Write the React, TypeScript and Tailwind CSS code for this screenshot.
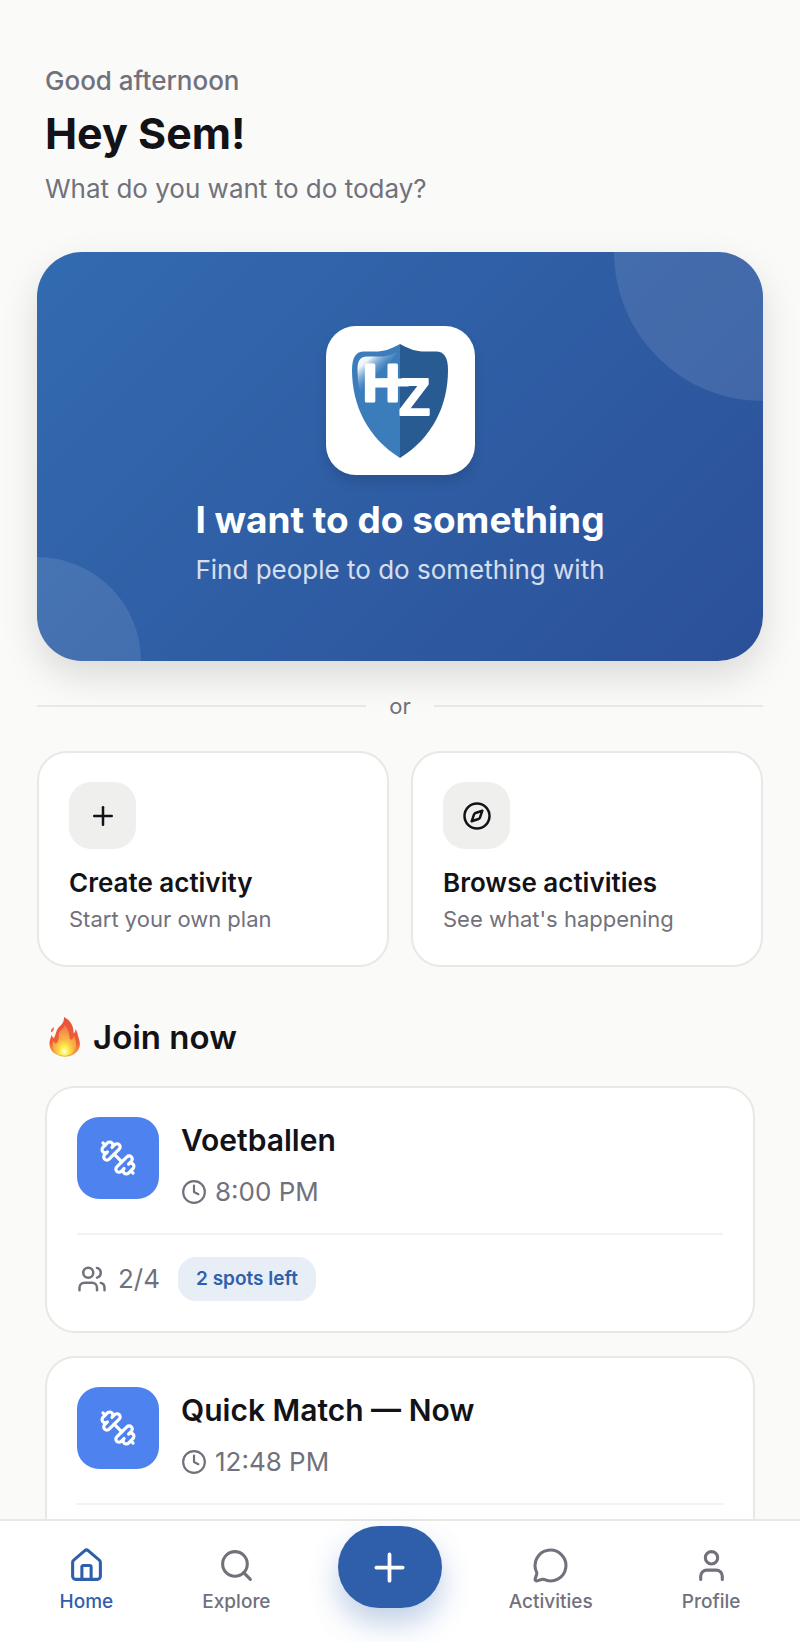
import type { ReactNode } from "react";
import {
  Clock,
  Compass,
  House,
  MessageCircle,
  Plus,
  Search,
  User,
  Users,
} from "lucide-react";

type Activity = {
  title: string;
  time: string;
  people?: string;
  spots?: string;
};

const activities: Activity[] = [
  { title: "Voetballen", time: "8:00 PM", people: "2/4", spots: "2 spots left" },
  { title: "Quick Match — Now", time: "12:48 PM" },
];

function ShieldLogo() {
  return (
    <svg viewBox="0 0 98 116" className="h-[116px] w-[98px]" role="img" aria-label="HZ">
      <defs>
        <linearGradient id="shine" gradientUnits="userSpaceOnUse" x1="8" y1="14" x2="27" y2="34">
          <stop offset="0" stopColor="#fff" />
          <stop offset="0.3" stopColor="#fff" stopOpacity="0.9" />
          <stop offset="1" stopColor="#5b9bd5" stopOpacity="0" />
        </linearGradient>
      </defs>
      <path
        d="M49 1C40 6 33 8.500 24 8.500H13C5 8.500 1 14 1 27C1 63 17 95 49 115Z"
        fill="#3b7dbb"
      />
      <path
        d="M49 1C58 6 65 8.500 74 8.500H85C93 8.500 97 14 97 27C97 63 81 95 49 115Z"
        fill="#275b92"
      />
      <path d="M6.500 26C6.500 17 10 13.500 16 13.500H30C37 13.500 42 11 46 9C40 24 20 28 10 52C7.500 45 6.500 34 6.500 26Z" fill="url(#shine)" />
      <g
        fill="#fff"
        stroke="#fff"
        strokeLinejoin="round"
        fontFamily="'Liberation Sans', sans-serif"
        fontWeight="700"
      >
        <text x="12" y="58" fontSize="51" strokeWidth="3">H</text>
        <text x="48" y="72" fontSize="51" strokeWidth="2">Z</text>
        <rect x="28" y="36.500" width="30" height="6" rx="1" strokeWidth="2" />
      </g>
    </svg>
  );
}

function Flame() {
  return (
    <svg viewBox="0 0 32 40" className="h-10 w-8" aria-hidden="true">
      <defs>
        <linearGradient id="flame-outer" x1="0" y1="0" x2="0" y2="1">
          <stop offset="0" stopColor="#e8533a" />
          <stop offset="0.65" stopColor="#ee6036" />
          <stop offset="1" stopColor="#f6b13c" />
        </linearGradient>
        <radialGradient id="flame-inner" cx="0.5" cy="0.86" r="0.8">
          <stop offset="0" stopColor="#fffde0" />
          <stop offset="0.2" stopColor="#fdf04d" />
          <stop offset="0.5" stopColor="#f9b545" />
          <stop offset="1" stopColor="#ef7d4b" />
        </radialGradient>
      </defs>
      <path
        d="M15 0C21 3 25 9 24.500 16C26 16 26.500 14 26.500 12C29 16 29 19 30 22C33 31 28 37 21 39C17 40 12 40 9 38C3 36 0 31 0.500 25C1 22 2 20 2.500 18C3.500 20 4 21 5 21C7 18 6.500 14 10 10C14 7 15 4 15 0Z"
        fill="url(#flame-outer)"
      />
      <path d="M5 10C3 11 1.500 13 2 15C4 15 5 13 5 10Z" fill="#ee6948" />
      <path
        d="M15.500 8C20 13 20 17 21 22C23 24 24 21 25 19C29 27 27 34 22 37C17 40 11 39 7 36C3 33 3 28 4.500 24C6 27 7 27 8.500 25C11 20 9 17 11 14C13 12 15 11 15.500 8Z"
        fill="url(#flame-inner)"
      />
    </svg>
  );
}

function DumbbellIcon() {
  return (
    <svg
      viewBox="0 0 24 24"
      className="size-[38px]"
      fill="none"
      stroke="currentColor"
      strokeWidth="2"
      strokeLinecap="round"
      strokeLinejoin="round"
      aria-hidden="true"
    >
      <path d="M14.4 14.4 9.6 9.6" />
      <path d="M18.657 21.485a2 2 0 1 1-2.829-2.828l-1.767 1.768a2 2 0 1 1-2.829-2.829l6.364-6.364a2 2 0 1 1 2.829 2.829l-1.768 1.767a2 2 0 1 1 2.828 2.829z" />
      <path d="m21.5 21.5-1.4-1.4" />
      <path d="M3.9 3.9 2.5 2.5" />
      <path d="M6.404 12.768a2 2 0 1 1-2.829-2.829l1.768-1.767a2 2 0 1 1-2.828-2.829l2.828-2.828a2 2 0 1 1 2.829 2.828l1.767-1.768a2 2 0 1 1 2.829 2.829z" />
    </svg>
  );
}

function ActionCard({ icon, title, text }: { icon: ReactNode; title: string; text: string }) {
  return (
    <button
      type="button"
      className="flex flex-col items-start rounded-[30px] border-2 border-[#e8e8e4] bg-white px-[30px] pt-[29px] pb-7 text-left"
    >
      <span className="flex size-[67px] items-center justify-center rounded-[22px] bg-[#efefed]">
        {icon}
      </span>
      <span className="mt-4 text-[26px] leading-9 font-semibold">{title}</span>
      <span className="text-[22px] leading-9 text-[#71717c]">{text}</span>
    </button>
  );
}

function ActivityCard({ activity }: { activity: Activity }) {
  return (
    <li className="rounded-[30px] border-2 border-[#e8e8e4] bg-white px-[30px] pt-[29px] pb-[30px]">
      <div className="flex gap-[22px]">
        <div className="flex size-[82px] shrink-0 items-center justify-center rounded-[22px] bg-[#4e82ee] text-white">
          <DumbbellIcon />
        </div>
        <div className="pt-[3px]">
          <h3 className="text-[30px] leading-10 font-semibold">{activity.title}</h3>
          <p className="mt-[14px] flex items-center gap-2 text-[26px] leading-9 text-[#71717c]">
            <Clock size={26} />
            {activity.time}
          </p>
        </div>
      </div>
      <div className="mt-[23px] flex min-h-[68px] items-center border-t-2 border-[#f2f2f0] pt-[22px]">
        {activity.people && (
          <span className="flex items-center gap-[11px] text-[26px] leading-9 text-[#71717c]">
            <Users size={30} />
            {activity.people}
          </span>
        )}
        {activity.spots && (
          <span className="ml-[18px] flex h-11 items-center rounded-[18px] bg-[#e7eef6] px-[18px] text-[19px] font-semibold text-[#2f5fab]">
            {activity.spots}
          </span>
        )}
      </div>
    </li>
  );
}

function NavItem({ icon, label, active = false }: { icon: ReactNode; label: string; active?: boolean }) {
  return (
    <a
      href="#"
      aria-current={active ? "page" : undefined}
      className={`flex flex-col items-center gap-1 px-[22px] pt-[26px] text-[19px] leading-7 font-medium ${
        active ? "text-[#2f5fab]" : "text-[#71717c]"
      }`}
    >
      {icon}
      {label}
    </a>
  );
}

export default function App() {
  return (
    <div className="flex h-dvh flex-col bg-[#fafaf8] font-['Inter',sans-serif] text-[#121217]">
      <main className="min-h-0 flex-1 overflow-y-auto px-[37px] pt-[62px] pb-6 [scrollbar-width:none]">
        <header className="px-2">
          <p className="text-[26px] leading-[38px] font-medium text-[#71717c]">Good afternoon</p>
          <h1 className="mt-2 text-[43px] leading-[50px] font-bold">Hey Sem!</h1>
          <p className="mt-3 text-[26px] leading-[38px] text-[#71717c]">What do you want to do today?</p>
        </header>

        <button
          type="button"
          className="relative mt-11 flex w-full flex-col items-center overflow-hidden rounded-[45px] bg-linear-135 from-[#336bb0] to-[#2b5099] pt-[74px] pb-[72px] text-white shadow-[0_15px_37px_rgba(0,0,0,0.13)]"
        >
          <span className="absolute -top-[149px] -right-[149px] size-[298px] rounded-full bg-white/10" />
          <span className="absolute -bottom-[104px] -left-[104px] size-[208px] rounded-full bg-white/10" />
          <span className="flex size-[149px] items-center justify-center rounded-[30px] bg-white shadow-[0_7px_12px_rgba(0,0,0,0.12)]">
            <ShieldLogo />
          </span>
          <span className="mt-[21px] text-[37px] leading-[48px] font-bold">I want to do something</span>
          <span className="mt-[7px] text-[26px] leading-[38px] text-white/80">Find people to do something with</span>
        </button>

        <div className="mt-[30px] flex items-center gap-[23px] text-[22px] leading-[30px] text-[#71717c]">
          <span className="h-0.5 flex-1 bg-[#e8e8e4]" />
          or
          <span className="h-0.5 flex-1 bg-[#e8e8e4]" />
        </div>

        <div className="mt-[30px] grid grid-cols-2 gap-[22px]">
          <ActionCard icon={<Plus size={30} />} title="Create activity" text="Start your own plan" />
          <ActionCard icon={<Compass size={30} />} title="Browse activities" text="See what's happening" />
        </div>

        <section className="mt-12 px-2">
          <h2 className="flex items-center gap-3 pl-1 text-[33px] leading-[44px] font-semibold">
            <Flame />
            Join now
          </h2>
          <ul className="mt-[27px] flex flex-col gap-[23px]">
            {activities.map((activity) => (
              <ActivityCard key={activity.title} activity={activity} />
            ))}
          </ul>
        </section>
      </main>

      <nav className="flex h-[123px] shrink-0 items-start justify-around border-t-2 border-[#e8e8e4] bg-white px-[15px]">
        <NavItem icon={<House size={37} />} label="Home" active />
        <NavItem icon={<Search size={37} />} label="Explore" />
        <button
          type="button"
          aria-label="New activity"
          className="mt-[5px] flex h-[82px] w-[104px] items-center justify-center rounded-full bg-[#2f5fab] text-white shadow-[0_15px_30px_rgba(47,95,171,0.3)]"
        >
          <Plus size={45} />
        </button>
        <NavItem icon={<MessageCircle size={37} />} label="Activities" />
        <NavItem icon={<User size={37} />} label="Profile" />
      </nav>
    </div>
  );
}
